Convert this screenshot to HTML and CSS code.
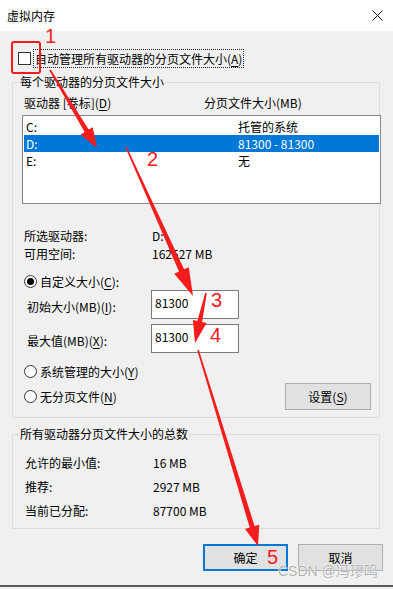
FILE: index.html
```html
<!DOCTYPE html>
<html lang="zh-CN">
<head>
  <meta charset="UTF-8">
  <title>虚拟内存</title>
  <link rel="stylesheet" href="styles.css">
</head>
<body>
  <div class="titlebar">
    <span class="title">虚拟内存</span>
    <svg class="close" width="11" height="11" viewBox="0 0 11 11"><path d="M0.5 0.5L10.5 10.5M10.5 0.5L0.5 10.5" stroke="#111" stroke-width="1"/></svg>
  </div>

  <div class="auto-row">
    <span class="checkbox"></span>
    <span class="focus">自动管理所有驱动器的分页文件大小(<u>A</u>)</span>
  </div>

  <fieldset class="group">
    <legend>每个驱动器的分页文件大小</legend>
    <div class="group-body drives">
      <div class="list-head">
        <span class="col1">驱动器 [卷标](<u>D</u>)</span>
        <span>分页文件大小(MB)</span>
      </div>
      <div class="listbox">
        <div class="row"><span class="col1">C:</span><span>托管的系统</span></div>
        <div class="row sel"><span class="col1">D:</span><span>81300 - 81300</span></div>
        <div class="row"><span class="col1">E:</span><span>无</span></div>
      </div>

      <div class="info">
        <div class="info-row"><span class="key">所选驱动器:</span><span>D:</span></div>
        <div class="info-row"><span class="key">可用空间:</span><span>162527 MB</span></div>
      </div>

      <div class="radio-row first"><span class="radio on"></span><span>自定义大小(<u>C</u>):</span></div>
      <div class="size-row">
        <span class="size-label">初始大小(MB)(<u>I</u>):</span>
        <span class="size-input">81300</span>
      </div>
      <div class="size-row second">
        <span class="size-label">最大值(MB)(<u>X</u>):</span>
        <span class="size-input">81300</span>
      </div>
      <div class="radio-row"><span class="radio"></span><span>系统管理的大小(<u>Y</u>)</span></div>
      <div class="last-row">
        <div class="radio-item"><span class="radio"></span><span>无分页文件(<u>N</u>)</span></div>
        <button class="btn set">设置(<u>S</u>)</button>
      </div>
    </div>
  </fieldset>

  <fieldset class="group totals">
    <legend>所有驱动器分页文件大小的总数</legend>
    <div class="group-body">
      <div class="total-row"><span class="key">允许的最小值:</span><span>16 MB</span></div>
      <div class="total-row"><span class="key">推荐:</span><span>2927 MB</span></div>
      <div class="total-row"><span class="key">当前已分配:</span><span>87700 MB</span></div>
    </div>
  </fieldset>

  <div class="actions">
    <button class="btn default">确定</button>
    <button class="btn">取消</button>
  </div>
  <div class="bottom-edge"></div>

  <!-- annotation layer drawn over the dialog -->
  <svg class="marks" width="393" height="589" viewBox="0 0 393 589">
    <rect x="12" y="42" width="28" height="31" rx="2" fill="none" stroke="#f41c1c" stroke-width="2"/>
    <polygon points="49.3,70.4 84.6,132.1 80.7,134.5 97,148 92.7,127.3 88.7,129.6 50.7,69.6"/>
    <polygon points="125.3,147.3 179,271.6 174.2,273.7 193,296 188.8,267.2 184.1,269.3 126.7,146.7"/>
    <polygon points="205.2,292.8 197.4,321 192.9,320 195,343 206.6,323 202.1,322 206.8,293.2"/>
    <polygon points="197.2,350.2 249.7,527.6 245,529.1 258,546 259.3,524.7 254.6,526.1 198.8,349.8"/>
    <text x="45" y="43">1</text>
    <text x="147" y="166">2</text>
    <text x="211" y="307">3</text>
    <text x="210" y="342">4</text>
    <text x="267" y="564">5</text>
  </svg>
  <div class="watermark">CSDN @冯璆鸣</div>
</body>
</html>
```

FILE: styles.css
```css
:root {
  --face: #f0f0f0;
  --etch: #dcdcdc;
  --accent: #0078d7;
  --mark: #f41c1c;
}

* {
  box-sizing: border-box;
}

html, body {
  margin: 0;
  width: 393px;
  height: 589px;
  overflow: hidden;
}

body {
  position: relative;
  background: var(--face);
  font-family: "Noto Sans CJK SC", "Microsoft YaHei", sans-serif;
  font-size: 12px;
  color: #000;
}

u {
  text-decoration-thickness: 1px;
  text-underline-offset: 2px;
}

.titlebar {
  height: 31px;
  background: #fff;
  display: flex;
  align-items: center;
  justify-content: space-between;
  padding: 0 10px 0 7px;
  line-height: 16px;
}

.close {
  display: block;
}

.auto-row {
  display: flex;
  align-items: center;
  gap: 2px;
  height: 19px;
  margin: 18px 0 0 18px;
}

.checkbox {
  width: 13px;
  height: 13px;
  border: 1px solid #333;
  background: #fff;
}

.focus {
  border: 1px dotted #222;
  line-height: 17px;
  padding: 0 1px;
}

.group {
  margin: 6px 13px 0 12px;
  padding: 0;
  min-width: 0;
  border: 1px solid var(--etch);
}

.group legend {
  margin-left: 6px;
  padding: 0 1px;
  line-height: 16px;
}

.drives {
  padding: 5px 0 7px 9px;
}

.list-head {
  display: flex;
  line-height: 16px;
  padding-left: 2px;
}

.list-head .col1 {
  width: 180px;
}

.listbox {
  margin-top: 4px;
  width: 359px;
  height: 89px;
  border: 1px solid #828790;
  background: #fff;
  padding: 2px 1px 0;
}

.row {
  display: flex;
  line-height: 17px;
  padding-left: 2px;
}

.row .col1 {
  width: 212px;
}

.row.sel {
  background: var(--accent);
  color: #fff;
}

.info {
  margin-top: 23px;
}

.info-row {
  display: flex;
  line-height: 18px;
  padding-left: 2px;
}

.key {
  width: 128px;
}

.radio-row,
.radio-item {
  display: flex;
  align-items: center;
  gap: 3px;
  height: 18px;
  padding-left: 2px;
}

.radio-row {
  margin-top: 9px;
}

.radio {
  position: relative;
  width: 13px;
  height: 13px;
  border: 1px solid #333;
  border-radius: 50%;
  background: #fff;
}

.radio.on::after {
  content: "";
  position: absolute;
  left: 2px;
  top: 2px;
  width: 7px;
  height: 7px;
  border-radius: 50%;
  background: #000;
}

.size-row {
  display: flex;
  align-items: center;
  height: 29px;
  padding-left: 5px;
}

.size-row.second {
  margin-top: 5px;
}

.size-label {
  width: 124px;
  padding-top: 4px;
}

.size-input {
  width: 88px;
  height: 29px;
  border: 1px solid #7a7a7a;
  background: #fff;
  padding: 0 0 3px 3px;
  line-height: 24px;
}

.last-row {
  display: flex;
  align-items: center;
  justify-content: space-between;
  height: 27px;
  margin-top: 3px;
}

.btn {
  font: inherit;
  color: #000;
  height: 27px;
  width: 85px;
  padding: 0;
  background: #e1e1e1;
  border: 1px solid #adadad;
}

.btn.set {
  width: 86px;
  margin-right: 8px;
}

.btn.default {
  border: 2px solid var(--accent);
}

.totals {
  margin-top: 8px;
}

.totals .group-body {
  padding: 9px 0 5px 12px;
}

.total-row {
  display: flex;
  line-height: 24px;
}

.actions {
  display: flex;
  gap: 10px;
  margin-top: 15px;
  padding-left: 203px;
}

.bottom-edge {
  margin-top: 14px;
  height: 2px;
  background: #5a5a5a;
}

.marks {
  position: absolute;
  left: 0;
  top: 0;
  pointer-events: none;
  fill: var(--mark);
}

.marks text {
  font-family: "Liberation Sans", Arial, sans-serif;
  font-size: 20px;
}

.watermark {
  position: absolute;
  left: 278px;
  top: 562px;
  font-family: "Liberation Sans", "Noto Sans CJK SC", sans-serif;
  font-size: 14px;
  line-height: 18px;
  color: rgba(110, 110, 110, 0.55);
  text-shadow: 0 0 1px #fff, 0 0 1px #fff;
  pointer-events: none;
}
```
